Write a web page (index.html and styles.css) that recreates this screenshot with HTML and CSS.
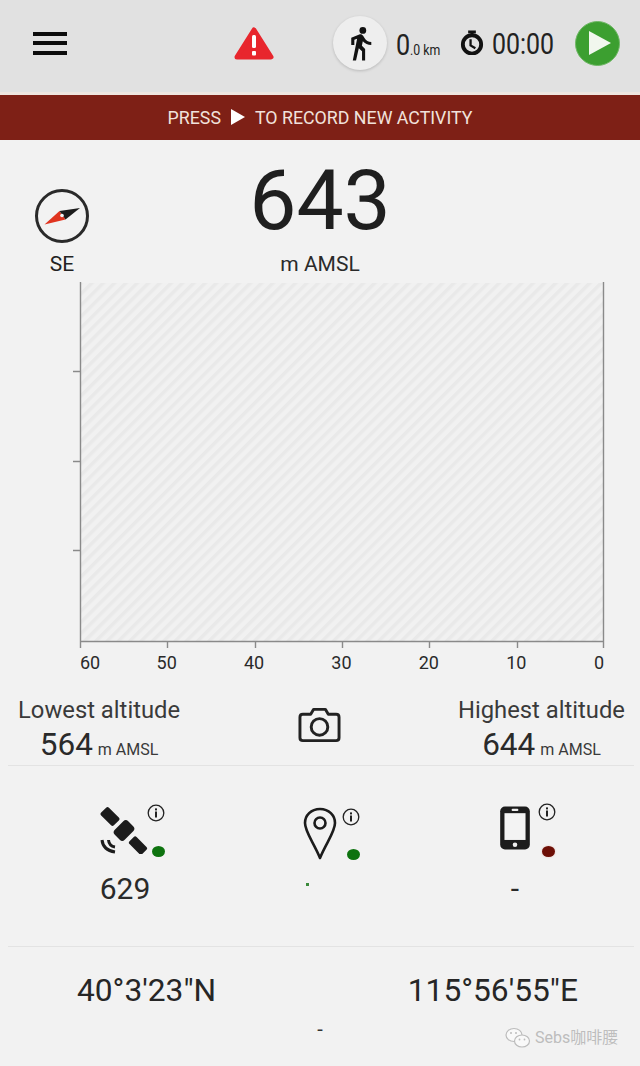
FILE: index.html
```html
<!DOCTYPE html>
<html lang="en">
<head>
<meta charset="utf-8">
<title>Altitude</title>
<link rel="stylesheet" href="styles.css">
</head>
<body>
<div class="page">
  <header class="topbar">
    <div class="menu"><span></span><span></span><span></span></div>
    <svg class="warn" viewBox="0 0 40 34"><path d="M20 3 L37 30 H3 Z" fill="#e8262d" stroke="#e8262d" stroke-width="5" stroke-linejoin="round"/><rect x="18" y="8" width="4" height="13" rx="1.5" fill="#fff"/><rect x="18" y="24" width="4" height="4.5" rx="1" fill="#fff"/></svg>
    <div class="walker"><svg viewBox="0 0 24 24"><circle cx="13.5" cy="3.5" r="2.2" fill="#111"/><path fill="#111" d="M9.8 8.9L7 23h2.1l1.8-8 2.1 2v6h2v-7.5l-2.1-2 .6-3C14.8 12 16.8 13 19 13v-2c-1.9 0-3.5-1-4.3-2.4l-1-1.6c-.4-.6-1-1-1.7-1-.3 0-.5.1-.8.1L6 8.3V13h2V9.6l1.8-.7"/></svg></div>
    <div class="dist"><span class="dist-big">0</span><span class="dist-small">.0 km</span></div>
    <svg class="timer" viewBox="0 0 24 26"><rect x="8" y="0.5" width="8" height="3" fill="#111"/><rect x="10.5" y="2" width="3" height="4" fill="#111"/><circle cx="12" cy="15" r="9.5" fill="none" stroke="#111" stroke-width="4"/><path d="M10.5 9.5 V16 L15.5 19" fill="none" stroke="#111" stroke-width="2.4"/></svg>
    <div class="clock"><span>00:00</span></div>
    <div class="play"><svg viewBox="0 0 24 26"><path d="M2 1 L24 13 L2 25 Z" fill="#f1f7ee"/></svg></div>
  </header>
  <div class="banner"><span>PRESS</span><svg viewBox="0 0 14 16"><path d="M0 0 L14 8 L0 16 Z" fill="#fff"/></svg><span>TO RECORD NEW ACTIVITY</span></div>

  <section class="hero">
    <div class="compass">
      <svg viewBox="0 0 56 56"><circle cx="28" cy="28" r="25.5" fill="none" stroke="#2a2a2a" stroke-width="3"/><path d="M10.5 36.5 L25.5 23 L31.5 31.5 Z" fill="#e0341f"/><path d="M46 20 L25.5 23 L31.5 31.5 Z" fill="#1c1c1c"/><circle cx="28" cy="27.5" r="1.8" fill="#f4f4f4"/></svg>
      <span>SE</span>
    </div>
    <div class="reading"><div class="reading-num">643</div><div class="reading-unit">m AMSL</div></div>
  </section>

  <svg class="chart" viewBox="0 0 640 367" width="640" height="367">
    <defs><pattern id="hatch" width="8" height="8" patternUnits="userSpaceOnUse" patternTransform="rotate(45)"><rect width="8" height="8" fill="#f1f1f1"/><rect width="3.5" height="8" fill="#e9e9e9"/></pattern></defs>
    <rect x="81" y="1" width="522" height="358" fill="url(#hatch)"/>
    <g stroke="#8a8a8a" stroke-width="1.4" fill="none">
      <path d="M80.5 0 V366"/><path d="M603.5 0 V366"/><path d="M80 359.5 H604"/>
      <path d="M73 89.5 H80M73 179.5 H80M73 268.5 H80"/>
      <path d="M167.5 360 V366M255.5 360 V366M342.5 360 V366M429.5 360 V366M517.5 360 V366"/>
    </g>
  </svg>
  <div class="axis"><span>60</span><span>50</span><span>40</span><span>30</span><span>20</span><span>10</span><span>0</span></div>

  <section class="stats">
    <div class="stat"><div class="stat-label">Lowest altitude</div><div class="stat-val"><b>564</b> <i>m AMSL</i></div></div>
    <svg class="camera" viewBox="0 0 44 36"><path d="M5 7 H13 L16 2 H28 L31 7 H39 Q42 7 42 10 V31 Q42 34 39 34 H5 Q2 34 2 31 V10 Q2 7 5 7 Z" fill="none" stroke="#222" stroke-width="3" stroke-linejoin="round"/><circle cx="22" cy="20" r="8.5" fill="none" stroke="#222" stroke-width="3"/></svg>
    <div class="stat"><div class="stat-label">Highest altitude</div><div class="stat-val"><b>644</b> <i>m AMSL</i></div></div>
  </section>

  <section class="status">
    <div class="cell">
      <div class="icon-wrap">
        <svg class="ic-sat" viewBox="0 0 48 48"><g fill="#1c1c1c"><rect x="1" y="5" width="18" height="11" rx="2" transform="rotate(45 10 10.5)"/><rect x="29" y="34.5" width="18" height="10" rx="2" transform="rotate(45 38 39.5)"/><rect x="17" y="15" width="14" height="19" rx="3.5" transform="rotate(45 24 24.5)"/></g><path d="M2 34 Q3 44 15 46M8.5 34 Q9 40 15 41" fill="none" stroke="#1c1c1c" stroke-width="3"/></svg>
        <svg class="info info-a" viewBox="0 0 18 18"><circle cx="9" cy="9" r="7.8" fill="none" stroke="#222" stroke-width="1.3"/><rect x="8" y="7.5" width="2" height="6" fill="#222"/><rect x="8" y="4.4" width="2" height="2" fill="#222"/></svg>
        <span class="dot dot-a"></span>
      </div>
      <div class="cell-val">629</div>
    </div>
    <div class="cell">
      <div class="icon-wrap">
        <svg class="ic-pin" viewBox="0 0 36 56"><path d="M18 3 C9 3 3 9.5 3 17 C3 26 12 37 18 52 C24 37 33 26 33 17 C33 9.5 27 3 18 3 Z" fill="none" stroke="#1c1c1c" stroke-width="2.6" stroke-linejoin="round"/><circle cx="18" cy="17" r="5.5" fill="none" stroke="#1c1c1c" stroke-width="2.6"/></svg>
        <svg class="info info-b" viewBox="0 0 18 18"><circle cx="9" cy="9" r="7.8" fill="none" stroke="#222" stroke-width="1.3"/><rect x="8" y="7.5" width="2" height="6" fill="#222"/><rect x="8" y="4.4" width="2" height="2" fill="#222"/></svg>
        <span class="dot dot-b"></span>
      </div>
      <div class="speck"></div>
    </div>
    <div class="cell">
      <div class="icon-wrap">
        <svg class="ic-phone" viewBox="0 0 32 46"><rect x="0.5" y="0.5" width="31" height="45" rx="5" fill="#1c1c1c"/><rect x="5" y="7.5" width="22" height="28" fill="#f3f3f3"/><rect x="12.5" y="3" width="7" height="2.2" rx="1" fill="#eee"/><circle cx="16" cy="40.5" r="2.4" fill="#eee"/></svg>
        <svg class="info info-c" viewBox="0 0 18 18"><circle cx="9" cy="9" r="7.8" fill="none" stroke="#222" stroke-width="1.3"/><rect x="8" y="7.5" width="2" height="6" fill="#222"/><rect x="8" y="4.4" width="2" height="2" fill="#222"/></svg>
        <span class="dot dot-c"></span>
      </div>
      <div class="cell-val">-</div>
    </div>
  </section>

  <section class="coords">
    <div class="coord-row"><span>40°3'23"N</span><span>115°56'55"E</span></div>
    <div class="coord-dash">-</div>
    <div class="mark">
      <svg viewBox="0 0 26 22"><g fill="#f9f9f9" stroke="#bcbcbc" stroke-width="1.2"><ellipse cx="9" cy="8" rx="8" ry="6.5"/><ellipse cx="17" cy="14" rx="7.5" ry="6"/></g><g fill="#bcbcbc"><circle cx="6" cy="6" r="1"/><circle cx="11" cy="6" r="1"/><circle cx="14.5" cy="12.5" r=".9"/><circle cx="19.5" cy="12.5" r=".9"/></g></svg>
      <span>Sebs咖啡腰</span>
    </div>
  </section>
</div>
</body>
</html>
```
FILE: styles.css
```css
* { box-sizing: border-box; }
html, body { margin: 0; padding: 0; }
body { background: #f2f2f2; color: #222; font-family: Roboto, "Noto Sans CJK SC", sans-serif; }
.page { width: 640px; height: 1066px; overflow: hidden; }

.topbar { display: flex; align-items: center; height: 95px; padding-bottom: 6px; background: #e1e1e1; border-bottom: 3px solid #efe6e0; }
.menu { display: flex; flex-direction: column; gap: 5.5px; width: 34px; margin-left: 33px; }
.menu span { display: block; height: 4px; background: #0c0c0c; }
.warn { width: 40px; height: 34px; margin-left: 167px; margin-top: 1px; }
.walker { display: flex; align-items: center; justify-content: center; width: 54px; height: 54px; margin-left: 59px; border-radius: 50%; background: #eeeeee; box-shadow: 0 1px 3px rgba(0,0,0,.18); }
.walker svg { width: 37px; height: 37px; }
.dist { display: flex; align-items: baseline; width: 64px; margin-left: 9px; padding-top: 2px; }
.dist-big { font-size: 30px; display: inline-block; transform: scaleX(.84); transform-origin: left; width: 14px; }
.dist-small { font-size: 15px; display: inline-block; transform: scaleX(.82); transform-origin: left; white-space: nowrap; }
.timer { width: 24px; height: 25px; margin-top: -1px; }
.clock { width: 62px; margin-left: 8px; padding-top: 2px; font-size: 29px; white-space: nowrap; }
.clock span { display: inline-block; transform: scaleX(.86); transform-origin: left; }
.play { display: flex; align-items: center; justify-content: center; width: 45px; height: 45px; margin-left: 21px; padding-left: 3px; border-radius: 50%; background: #3c9f30; border: 1px solid #6fb765; }
.play svg { width: 24px; height: 26px; }

.banner { display: flex; align-items: center; justify-content: center; gap: 10px; height: 45px; padding-bottom: 1px; background: #7e2016; color: #f1e2dc; font-size: 17.8px; }
.banner svg { width: 14px; height: 16px; }

.hero { display: flex; height: 142px; }
.compass { display: flex; flex-direction: column; align-items: center; width: 56px; margin-left: 34px; padding-top: 48px; font-size: 21px; line-height: 24px; gap: 8px; flex: none; }
.compass svg { width: 56px; height: 56px; }
.reading { flex: none; width: 260px; margin-left: 100px; text-align: center; }
.reading-num { font-size: 84px; line-height: 84px; margin-top: 19px; color: #1f1f1f; }
.reading-unit { font-size: 21px; line-height: 24px; margin-top: 9px; color: #2a2a2a; }

.chart { display: block; }
.axis { display: flex; height: 28px; padding: 3px 36px 0 80px; font-size: 18px; line-height: 22px; color: #2a2a2a; }
.axis span { flex: none; width: 87.4px; text-align: center; }
.axis span:first-child { width: 43px; text-align: left; }
.axis span:last-child { flex: 1; width: auto; text-align: right; }

.stats { display: flex; justify-content: space-between; align-items: flex-start; height: 89px; margin: 0 6px 0 8px; padding: 19px 9px 0 10px; border-bottom: 1px solid #e3e3e3; }
.stat { text-align: center; color: #3a3a3a; }
.stat-label { font-size: 23.8px; line-height: 28px; }
.stat-val { margin-top: 5px; line-height: 32px; white-space: nowrap; }
.stat-val b { font-weight: 400; font-size: 31.5px; color: #2a2a2a; }
.stat-val i { font-style: normal; font-size: 16px; margin-left: 1px; }
.camera { width: 43px; height: 36px; margin-top: 11px; }

.status { display: grid; grid-template-columns: 195px 195px 195px; height: 181px; margin: 0 6px 0 8px; padding: 40px 0 0 19.5px; border-bottom: 1px solid #e3e3e3; }
.cell { display: flex; flex-direction: column; align-items: center; }
.icon-wrap { position: relative; height: 64px; width: 60px; display: flex; justify-content: center; }
.ic-sat { width: 48px; height: 48px; margin-left: -2px; }
.ic-pin { width: 36px; height: 56px; }
.ic-phone { width: 32px; height: 44px; }
.info { position: absolute; width: 18px; height: 18px; }
.info-a { left: 51.5px; top: -2px; }
.info-b { left: 51.5px; top: 2px; }
.info-c { left: 52.5px; top: -3px; }
.dot { position: absolute; width: 13px; height: 11px; border-radius: 50%; background: #0e730f; }
.dot-a { left: 56.5px; top: 40px; }
.dot-b { left: 56.5px; top: 43px; }
.dot-c { left: 56.5px; top: 40px; background: #6d0f06; box-shadow: 0 0 2px #e6b9b3; }
.cell-val { font-size: 30px; line-height: 36px; margin-top: 1px; color: #2a2a2a; }
.speck { width: 3px; height: 3px; margin-top: 13px; margin-left: -25px; background: #3b8a3b; }

.coords { position: relative; }
.coord-row { display: flex; justify-content: space-between; padding: 25px 62px 0 77px; font-size: 31.7px; line-height: 38px; color: #262626; }
.coord-dash { text-align: center; font-size: 20px; line-height: 24px; margin-top: 7px; color: #333; }
.mark { position: absolute; left: 505px; top: 80px; display: flex; align-items: center; gap: 4px; color: #bdbdbd; font-size: 16px; line-height: 22px; }
.mark svg { width: 26px; height: 22px; }
```
